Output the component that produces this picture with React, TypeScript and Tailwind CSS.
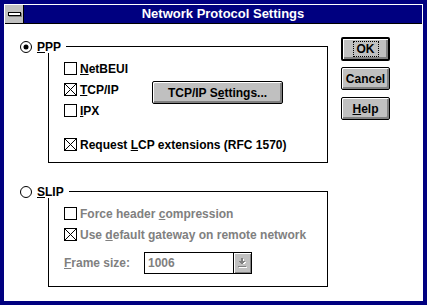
import React from "react";

function Radio({ checked }: { checked?: boolean }) {
  return (
    <svg width="12" height="12" viewBox="0 0 12 12" className="shrink-0 block">
      <circle cx="6" cy="6" r="5.5" fill="#fff" stroke="#000" strokeWidth="1" />
      {checked && <circle cx="6" cy="6" r="2.5" fill="#000" />}
    </svg>
  );
}

function Check({ checked }: { checked?: boolean }) {
  return (
    <div className="w-[13px] h-[13px] shrink-0 border border-black bg-white">
      {checked && (
        <svg width="11" height="11" viewBox="0 0 11 11" className="block">
          <path d="M0 0L11 11M11 0L0 11" stroke="#000" strokeWidth="1" />
        </svg>
      )}
    </div>
  );
}

function GroupHeader({ checked, children }: { checked?: boolean; children: React.ReactNode }) {
  return (
    <div className="flex h-[12px]">
      <Radio checked={checked} />
      <span className="ml-[5px] text-[12px] leading-[12px] font-bold">{children}</span>
      <div className="ml-[5px] flex-1 self-end h-[7px] border-t border-r border-black" />
    </div>
  );
}

function CheckRow({
  checked,
  disabled,
  children,
}: {
  checked?: boolean;
  disabled?: boolean;
  children: React.ReactNode;
}) {
  return (
    <div className="flex items-center h-[21px]">
      <Check checked={checked} />
      <span className={`ml-[3px] text-[12px] font-bold ${disabled ? "text-[#808080]" : "text-black"}`}>
        {children}
      </span>
    </div>
  );
}

function Btn({
  children,
  isDefault,
  className,
}: {
  children: React.ReactNode;
  isDefault?: boolean;
  className?: string;
}) {
  return (
    <div
      className={`flex items-center justify-center bg-[#c0c0c0] rounded-[2px] border-black shadow-[inset_1px_1px_0_#fff,inset_-2px_-2px_0_#808080] text-[12px] font-bold text-black ${
        isDefault ? "border-2" : "border"
      } ${className ?? ""}`}
    >
      {children}
    </div>
  );
}

export default function App() {
  return (
    <div className="w-[427px] h-[305px] bg-[#000080] p-[4px] flex font-['Liberation_Sans',Arial,sans-serif]">
      <div className="flex-1 flex flex-col border border-white">
        {/* title bar */}
        <div className="flex h-[19px] border-b border-black bg-[#000080]">
          <div className="w-[19px] border-r border-black bg-[#c0c0c0] flex items-center justify-center">
            <div className="w-[13px] h-[4px] bg-white border border-black shadow-[1px_1px_0_#808080]" />
          </div>
          <div className="flex-1 flex items-center justify-center text-white font-bold text-[13px]">
            Network Protocol Settings
          </div>
        </div>

        {/* client */}
        <div className="flex-1 bg-white flex items-start pl-[15px]">
          <div className="w-[308px] pt-[17px] flex flex-col">
            {/* PPP */}
            <GroupHeader checked>
              <u>P</u>PP
            </GroupHeader>
            <div className="ml-[28px] h-[110px] border-l border-r border-b border-black pl-[15px] pt-[5px] flex flex-col">
              <CheckRow>
                <u>N</u>etBEUI
              </CheckRow>
              <div className="flex items-center h-[21px]">
                <Check checked />
                <span className="ml-[3px] w-[72px] text-[12px] font-bold">
                  <u>T</u>CP/IP
                </span>
                <Btn className="mt-[6px] w-[131px] h-[23px]">
                  <span>
                    TCP/IP S<u>e</u>ttings...
                  </span>
                </Btn>
              </div>
              <CheckRow>
                <u>I</u>PX
              </CheckRow>
              <div className="mt-[13px]">
                <CheckRow checked>
                  Request <u>L</u>CP extensions (RFC 1570)
                </CheckRow>
              </div>
            </div>

            {/* SLIP */}
            <div className="mt-[23px]">
              <GroupHeader>
                <u>S</u>LIP
              </GroupHeader>
            </div>
            <div className="ml-[28px] h-[89px] border-l border-r border-b border-black pl-[15px] pt-[5px] flex flex-col">
              <CheckRow disabled>
                Force header <u>c</u>ompression
              </CheckRow>
              <CheckRow checked disabled>
                Use <u>d</u>efault gateway on remote network
              </CheckRow>
              <div className="mt-[7px] flex items-center">
                <span className="w-[80px] text-[12px] font-bold text-[#808080]">
                  <u>F</u>rame size:
                </span>
                <div className="flex h-[22px]">
                  <div className="w-[90px] border border-black bg-white flex items-center pl-[3px] text-[12px] font-bold text-[#808080]">
                    1006
                  </div>
                  <div className="w-[18px] border border-l-0 border-black bg-[#c0c0c0] shadow-[inset_1px_1px_0_#fff,inset_-1px_-1px_0_#808080] flex items-center justify-center">
                    <svg width="9" height="11" viewBox="0 0 9 11" className="block">
                      <rect x="4" y="1" width="2" height="3" fill="#fff" />
                      <rect x="2" y="4" width="6" height="1" fill="#fff" />
                      <rect x="3" y="5" width="4" height="1" fill="#fff" />
                      <rect x="1" y="9" width="8" height="1" fill="#fff" />
                      <rect x="3" y="0" width="2" height="3" fill="#808080" />
                      <rect x="1" y="3" width="6" height="1" fill="#808080" />
                      <rect x="2" y="4" width="4" height="1" fill="#808080" />
                      <rect x="3" y="5" width="2" height="1" fill="#808080" />
                      <rect x="0" y="8" width="8" height="1" fill="#808080" />
                    </svg>
                  </div>
                </div>
              </div>
            </div>
          </div>

          {/* buttons */}
          <div className="ml-[13px] w-[49px] pt-[13px] flex flex-col">
            <Btn isDefault className="h-[24px]">
              <span className="px-[3px] py-[1px] leading-[12px] outline outline-1 outline-dotted outline-black">OK</span>
            </Btn>
            <Btn className="mt-[6px] h-[23px]">Cancel</Btn>
            <Btn className="mt-[7px] h-[23px]">
              <span>
                <u>H</u>elp
              </span>
            </Btn>
          </div>
        </div>
      </div>
    </div>
  );
}
